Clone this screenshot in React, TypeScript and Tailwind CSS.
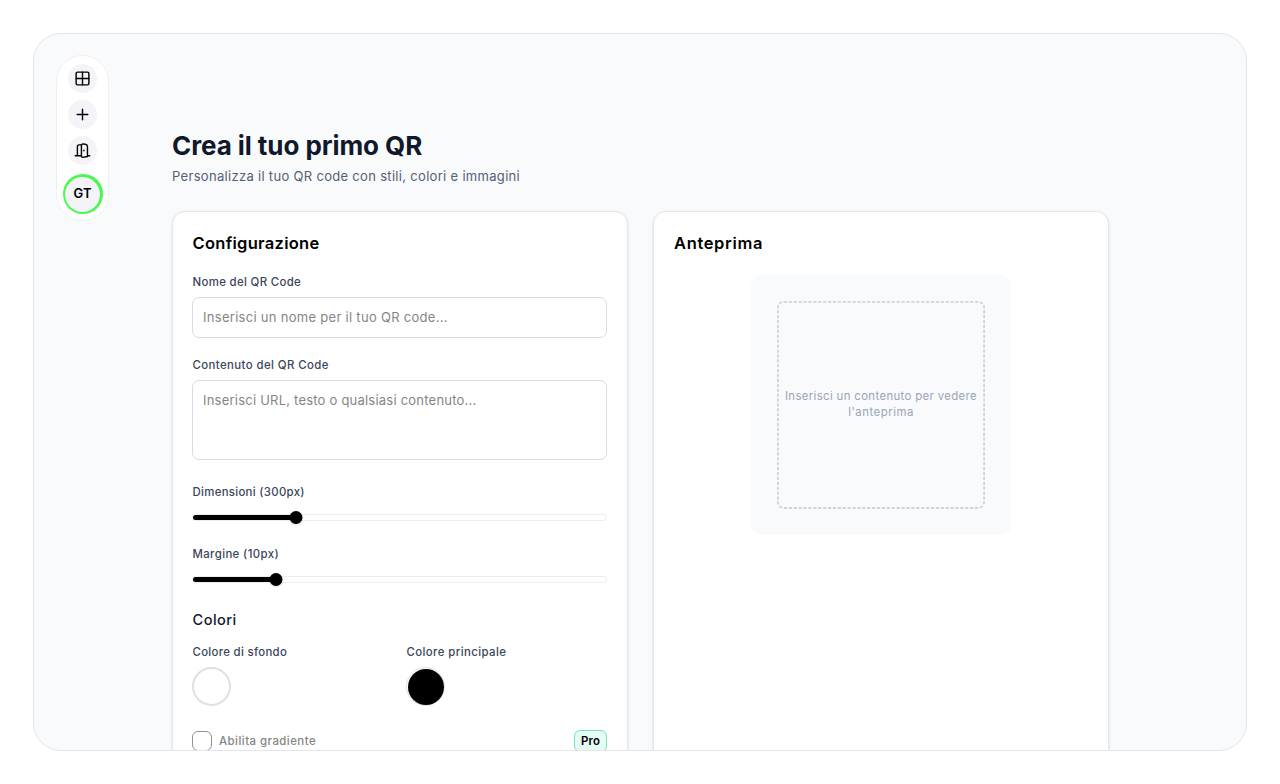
import type { ReactNode } from "react";

function NavButton({ label, children }: { label: string; children: ReactNode }) {
  return (
    <button aria-label={label} className="flex size-[29px] items-center justify-center rounded-full bg-[#f3f3f8] text-black">
      <svg viewBox="0 0 24 24" className="size-[17px]" fill="none" stroke="currentColor" strokeWidth="2" strokeLinecap="round" strokeLinejoin="round">
        {children}
      </svg>
    </button>
  );
}

function Sidebar() {
  return (
    <nav className="mt-[21px] ml-[22px] flex h-[166px] w-[53px] shrink-0 flex-col items-center gap-[7px] rounded-full border border-[#eeeff2] bg-white pt-2">
      <NavButton label="Dashboard">
        <rect x="3" y="3" width="18" height="18" rx="2" />
        <path d="M12 3v18M3 12h18" />
      </NavButton>
      <NavButton label="Nuovo">
        <path d="M12 4.5v15M4.5 12h15" />
      </NavButton>
      <NavButton label="Esci">
        <path d="M1.8 19.5H10M19.5 19.5h2.7M4.8 19.5V6.5a2.5 2.5 0 0 1 2.5-2.5H10" />
        <path d="M10.500 4.500c0-1.200.6-1.700 1.800-1.900l3.600.6c2 .4 3.100 1.200 3.100 3v14.300l-6.700 1.200c-1.200-.2-1.800-.7-1.800-1.900Z" />
        <path d="M14 11.5v1" />
      </NavButton>
      <div className="mt-0.5 flex size-10 items-center justify-center rounded-full bg-[#48f84c] p-[2.5px]">
        <div className="flex size-full items-center justify-center rounded-full bg-[#f3f3f8] text-[13px] font-semibold text-black">GT</div>
      </div>
    </nav>
  );
}

function Label({ className, children }: { className: string; children: ReactNode }) {
  return <div className={`h-4 pl-[0.5px] text-[11.4px] leading-[17px] font-medium whitespace-nowrap text-[#3b465b] ${className}`}>{children}</div>;
}

function Slider({ value }: { value: number }) {
  return (
    <div className="mt-[10.5px] flex h-[13px] items-center">
      <div className="relative h-[7px] w-full rounded-full border border-[#ececee] bg-white">
        <div className="absolute top-0 left-0 h-[5px] rounded-full bg-black" style={{ width: `${value}%` }} />
        <div className="absolute -top-1 size-[13px] -translate-x-1/2 rounded-full bg-black shadow-sm" style={{ left: `${value}%` }} />
      </div>
    </div>
  );
}

function Card({ children }: { children: ReactNode }) {
  return <section className="h-[700px] w-[456px] shrink-0 rounded-[13px] border border-[#e4e7eb] bg-white pt-5 pr-5 pl-[19px] shadow-sm">{children}</section>;
}

export default function App() {
  return (
    <div className="h-[784px] overflow-hidden bg-white p-[33px] font-['Inter','Liberation_Sans',sans-serif]">
      <div className="flex h-[718px] w-[1214px] overflow-hidden rounded-[28px] border border-[#e3e5e8] bg-[#f9fafc]">
        <Sidebar />
        <main className="ml-[63px] pt-[96px]">
          <h1 className="h-8 text-[26px] leading-8 font-bold tracking-[-0.07px] whitespace-nowrap text-[#10182b]">Crea il tuo primo QR</h1>
          <p className="mt-1 h-5 text-[13px] leading-5 tracking-[0.31px] whitespace-nowrap text-[#526074]">Personalizza il tuo QR code con stili, colori e immagini</p>
          <div className="mt-[25px] flex gap-[25px]">
            <Card>
              <h2 className="h-6 pl-[0.5px] text-[16.5px] leading-[23px] font-semibold tracking-[0.29px] text-black">Configurazione</h2>
              <Label className="mt-[18px] tracking-[0.34px]">Nome del QR Code</Label>
              <input className="mt-[7px] block h-[41px] w-full rounded-[7px] border border-[#d8dbe1] bg-white px-2.5 pb-px text-[13px] tracking-[0.29px] placeholder:text-[#858585]" placeholder="Inserisci un nome per il tuo QR code..." />
              <Label className="mt-[19px] tracking-[0.41px]">Contenuto del QR Code</Label>
              <textarea className="mt-[7px] block h-20 w-full resize-none rounded-[7px] border border-[#d8dbe1] bg-white px-2.5 py-[9px] text-[13px] leading-5 tracking-[0.22px] placeholder:text-[#858585]" placeholder="Inserisci URL, testo o qualsiasi contenuto..." />
              <Label className="mt-6 tracking-[0.31px]">Dimensioni (300px)</Label>
              <Slider value={25} />
              <Label className="mt-[22.5px] tracking-[0.38px]">Margine (10px)</Label>
              <Slider value={20} />
              <h3 className="mt-[23.5px] h-5 pl-[0.5px] text-[14.6px] leading-[22px] font-medium tracking-[0.43px] text-[#10182b]">Colori</h3>
              <div className="mt-[15px] flex">
                <div className="w-[214px]">
                  <Label className="tracking-[0.31px]">Colore di sfondo</Label>
                  <div className="mt-[7px] size-[39px] rounded-full border-2 border-[#e0e0e0] bg-white" />
                </div>
                <div>
                  <Label className="tracking-[0.41px]">Colore principale</Label>
                  <div className="mt-[7px] size-[39px] rounded-full border border-[#e0e0e0] bg-white p-[0.5px]">
                    <div className="size-full rounded-full bg-black" />
                  </div>
                </div>
              </div>
              <div className="mt-6 flex h-[22px] items-center">
                <div className="size-5 rounded-[6px] border border-[#929292] bg-white" />
                <span className="ml-[7px] pt-px text-[11.4px] font-medium tracking-[0.48px] text-[#858585]">Abilita gradiente</span>
                <span className="ml-auto flex h-[22px] w-[33px] items-center justify-center rounded-[6px] border border-[#77e5bc] bg-[#e5fbf3] pt-px text-[11.4px] font-semibold tracking-[0.15px] text-black">Pro</span>
              </div>
            </Card>
            <Card>
              <h2 className="ml-px h-6 text-[16.5px] leading-[23px] font-semibold tracking-[0.65px] text-black">Anteprima</h2>
              <div className="mt-[19px] ml-[78px] size-[260px] rounded-[10px] bg-[#f9fafc] p-[26px]">
                <div className="relative flex size-[208px] items-center justify-center text-center text-[11.4px] leading-4 text-[#9ba5b5]">
                  <svg className="absolute inset-0 size-full" viewBox="0 0 208 208" fill="none">
                    <rect x="0.9" y="0.8" width="206.2" height="206.2" rx="6" stroke="#d0d3d9" strokeWidth="1.8" strokeDasharray="3.2 1.7" />
                  </svg>
                  <p className="-mt-0.5"><span className="tracking-[0.35px] whitespace-nowrap">Inserisci un contenuto per vedere</span><br /><span className="tracking-[0.5px]">l'anteprima</span></p>
                </div>
              </div>
            </Card>
          </div>
        </main>
      </div>
    </div>
  );
}
